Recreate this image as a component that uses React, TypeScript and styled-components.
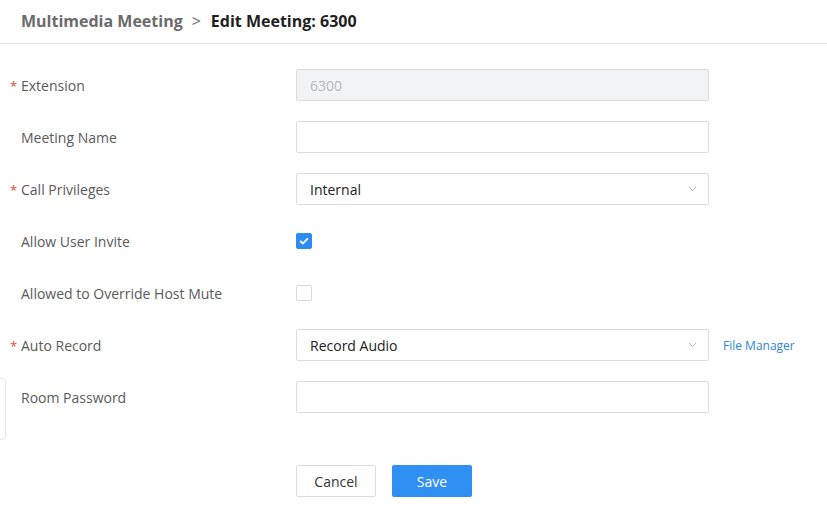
import React, { FC } from "react";
import styled, { createGlobalStyle } from "styled-components";

const GlobalStyle = createGlobalStyle`
  html, body {
    margin: 0;
    padding: 0;
    background: #fff;
  }
  body {
    font-family: "Open Sans", "Noto Sans", sans-serif;
    color: #333;
  }
`;

const Page = styled.div`
  position: relative;
  width: 827px;
  height: 512px;
  overflow: hidden;
  background: #fff;
`;

const Header = styled.div`
  display: flex;
  align-items: center;
  height: 44px;
  padding: 0 21px 2px;
  border-bottom: 1px solid #e8e8e8;
  font-size: 16px;
  font-weight: 700;
  box-sizing: border-box;
`;

const Crumb = styled.span<{ $current?: boolean }>`
  color: ${(p) => (p.$current ? "#1f1f1f" : "#6b6b6b")};
`;

const Sep = styled.span`
  color: #6b6b6b;
  margin: 0 10px 0 9px;
  font-weight: 400;
`;

const Form = styled.div`
  display: flex;
  flex-direction: column;
  gap: 20px;
  padding-top: 25px;
`;

const Row = styled.div`
  display: grid;
  grid-template-columns: 296px 413px auto;
  align-items: center;
  height: 32px;
`;

const Label = styled.div`
  position: relative;
  padding-left: 21px;
  font-size: 14px;
  color: #5a5a5a;
`;

const Star = styled.span`
  position: absolute;
  left: 10px;
  top: 1px;
  color: #e0502a;
  font-size: 13px;
`;

const Input = styled.div<{ $disabled?: boolean }>`
  box-sizing: border-box;
  height: 32px;
  border: 1px solid #dcdcdc;
  border-radius: 2px;
  background: ${(p) => (p.$disabled ? "#f2f3f5" : "#fff")};
  color: ${(p) => (p.$disabled ? "#b8b8b8" : "#222")};
  font-size: 14px;
  display: flex;
  align-items: center;
  padding: 0 13px;
`;

const Select = styled(Input)`
  justify-content: space-between;
  svg {
    margin-right: -2px;
  }
`;

const Check = styled.div<{ $on?: boolean }>`
  box-sizing: border-box;
  width: 16px;
  height: 16px;
  border-radius: 2px;
  border: 1px solid ${(p) => (p.$on ? "#2d8cf0" : "#d9d9d9")};
  background: ${(p) => (p.$on ? "#2d8cf0" : "#fff")};
  display: flex;
  align-items: center;
  justify-content: center;
`;

const Link = styled.a`
  margin-left: 14px;
  font-size: 12px;
  color: #2f86d6;
  text-decoration: none;
`;

const Actions = styled.div`
  display: flex;
  gap: 16px;
  padding-left: 296px;
  margin-top: 52px;
`;

const Button = styled.button<{ $primary?: boolean }>`
  width: 80px;
  height: 32px;
  box-sizing: border-box;
  border-radius: 2px;
  font-family: inherit;
  font-size: 14px;
  cursor: pointer;
  border: 1px solid ${(p) => (p.$primary ? "#2f8ff2" : "#dcdcdc")};
  background: ${(p) => (p.$primary ? "#2f8ff2" : "#fff")};
  color: ${(p) => (p.$primary ? "#fff" : "#333")};
`;

const SideTab = styled.div`
  position: absolute;
  left: -8px;
  top: 378px;
  width: 12px;
  height: 60px;
  border: 1px solid #e6e6e6;
  border-radius: 4px;
  background: #fff;
`;

const Chevron: FC = () => (
  <svg width="9" height="6" viewBox="0 0 9 6">
    <path d="M1 1l3.5 3.5L8 1" fill="none" stroke="#b5b5b5" strokeWidth="1" />
  </svg>
);

const Tick: FC = () => (
  <svg width="10" height="8" viewBox="0 0 10 8">
    <path d="M1.2 4l2.6 2.5L8.8 1.3" fill="none" stroke="#fff" strokeWidth="1.8" />
  </svg>
);

const Field: FC<{ label: string; required?: boolean; children?: React.ReactNode; extra?: React.ReactNode }> = ({
  label,
  required,
  children,
  extra,
}) => (
  <Row>
    <Label>
      {required && <Star>*</Star>}
      {label}
    </Label>
    <div>{children}</div>
    {extra ?? <span />}
  </Row>
);

const App: FC = () => (
  <Page>
    <GlobalStyle />
    <Header>
      <Crumb>Multimedia Meeting</Crumb>
      <Sep>&gt;</Sep>
      <Crumb $current>Edit Meeting: 6300</Crumb>
    </Header>
    <Form>
      <Field label="Extension" required>
        <Input $disabled>6300</Input>
      </Field>
      <Field label="Meeting Name">
        <Input />
      </Field>
      <Field label="Call Privileges" required>
        <Select>
          Internal
          <Chevron />
        </Select>
      </Field>
      <Field label="Allow User Invite">
        <Check $on>
          <Tick />
        </Check>
      </Field>
      <Field label="Allowed to Override Host Mute">
        <Check />
      </Field>
      <Field label="Auto Record" required extra={<Link href="#">File Manager</Link>}>
        <Select>
          Record Audio
          <Chevron />
        </Select>
      </Field>
      <Field label="Room Password">
        <Input />
      </Field>
    </Form>
    <Actions>
      <Button>Cancel</Button>
      <Button $primary>Save</Button>
    </Actions>
    <SideTab />
  </Page>
);

export default App;
